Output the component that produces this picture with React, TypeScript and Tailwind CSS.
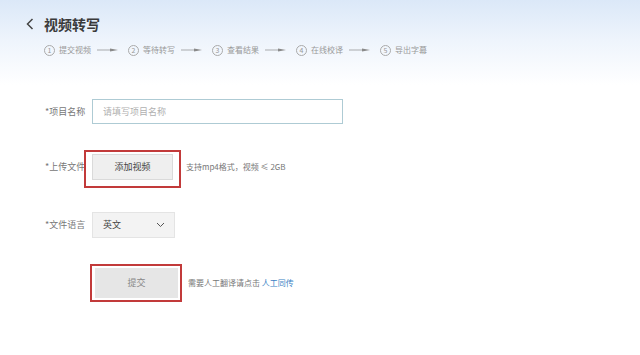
import React from "react"

const font = { fontFamily: '"Noto Sans CJK SC", "Noto Sans", sans-serif' }

const steps = ["提交视频", "等待转写", "查看结果", "在线校译", "导出字幕"]

function StepArrow() {
  return (
    <svg width="21" height="6" viewBox="0 0 21 6" className="ml-[5px] mr-[10px]">
      <line x1="0" y1="3" x2="16" y2="3" stroke="#8a8a8a" strokeWidth="0.7" />
      <path d="M13 1.6 L21 3 L13 4.4 Z" fill="#8a8a8a" />
    </svg>
  )
}

export default function App() {
  return (
    <div
      className="w-[640px] h-[355px] overflow-hidden bg-[linear-gradient(to_bottom,#dbe8f8_0px,#eef4fc_40px,#ffffff_85px)]"
      style={font}
    >
      {/* Header */}
      <div className="pt-[15px] pl-[26px] flex items-center h-[33px]">
        <svg width="8" height="12" viewBox="0 0 8 12" className="mr-[10px]">
          <path d="M6.5 1 L1.5 6 L6.5 11" fill="none" stroke="#444" strokeWidth="1.5" />
        </svg>
        <span className="text-[14px] leading-[18px] font-bold text-[#3a3a3a]">视频转写</span>
      </div>

      {/* Steps */}
      <div className="mt-[11px] pl-[44px] flex items-center h-[12px]">
        {steps.map((s, i) => (
          <div key={s} className="flex items-center">
            <div className="w-[11px] h-[11px] rounded-full border border-[#aaa] flex items-center justify-center text-[7px] leading-none text-[#999]">
              {i + 1}
            </div>
            <span className="ml-[4px] text-[8px] leading-[12px] text-[#999] w-[33px] whitespace-nowrap">{s}</span>
            {i < steps.length - 1 && <StepArrow />}
          </div>
        ))}
      </div>

      {/* Form */}
      <div className="mt-[43px] flex flex-col">
        <div className="flex items-center h-[25px]">
          <span className="pl-[45px] w-[92px] text-[9px] text-[#777]">*项目名称</span>
          <div className="w-[251px] h-[25px] border border-[#aecbd4] bg-white flex items-center pl-[10px] text-[9px] text-[#b0b0b0]">
            请填写项目名称
          </div>
        </div>

        <div className="mt-[30px] flex items-center h-[26px]">
          <span className="pl-[45px] w-[92px] text-[9px] text-[#777]">*上传文件</span>
          <div className="relative">
            <div className="w-[81px] h-[26px] bg-[#efefef] border border-[#dadada] flex items-center justify-center text-[9px] text-[#444]">
              添加视频
            </div>
            <div className="absolute -left-[8px] -top-[4px] -right-[8px] -bottom-[8px] border-2 border-[#c23a3a]" />
          </div>
          <span className="ml-[13px] text-[8px] text-[#777]">支持mp4格式，视频 ≤ 2GB</span>
        </div>

        <div className="mt-[32px] flex items-center h-[26px]">
          <span className="pl-[45px] w-[92px] text-[9px] text-[#777]">*文件语言</span>
          <div className="w-[83px] h-[26px] bg-[#f3f3f3] border border-[#e4e4e4] flex items-center justify-between pl-[10px] pr-[9px] text-[9px] text-[#444]">
            <span>英文</span>
            <svg width="9" height="6" viewBox="0 0 9 6">
              <path d="M1 1 L4.5 4.5 L8 1" fill="none" stroke="#555" strokeWidth="1" />
            </svg>
          </div>
        </div>

        <div className="mt-[30px] flex items-center h-[30px] pl-[95px]">
          <div className="relative">
            <div className="w-[83px] h-[30px] bg-[#e6e6e6] flex items-center justify-center text-[9px] text-[#888]">
              提交
            </div>
            <div className="absolute -left-[5px] -top-[4px] -right-[4px] -bottom-[4px] border-2 border-[#c23a3a]" />
          </div>
          <span className="ml-[10px] text-[8px] text-[#777]">
            需要人工翻译请点击 <span className="text-[#3b7fc4]">人工同传</span>
          </span>
        </div>
      </div>
    </div>
  )
}
